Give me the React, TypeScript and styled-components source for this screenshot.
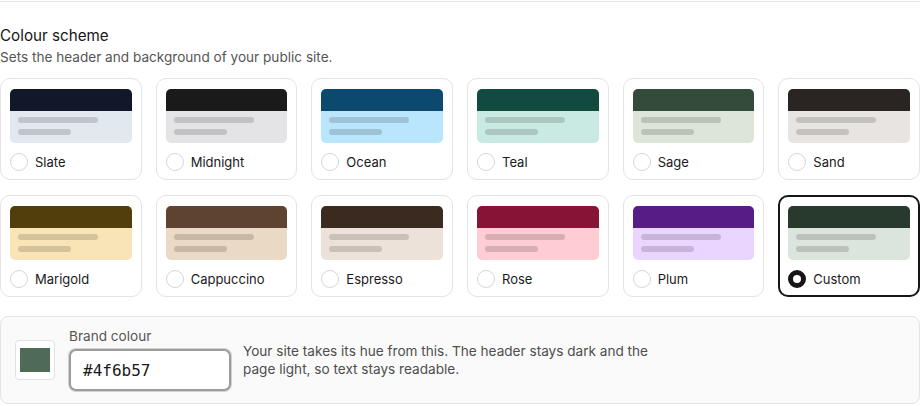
import styled, { createGlobalStyle } from 'styled-components';

type Scheme = {
	name: string;
	header: string;
	body: string;
};

const schemes: Scheme[] = [
	{ name: 'Slate', header: '#101829', body: '#e2e8f0' },
	{ name: 'Midnight', header: '#1a1a1a', body: '#e4e4e6' },
	{ name: 'Ocean', header: '#0b4a6e', body: '#bae6fd' },
	{ name: 'Teal', header: '#124a40', body: '#c9eae2' },
	{ name: 'Sage', header: '#344a3b', body: '#dce5d8' },
	{ name: 'Sand', header: '#2a2422', body: '#e7e4e1' },
	{ name: 'Marigold', header: '#523d0c', body: '#f9e4b7' },
	{ name: 'Cappuccino', header: '#5e4430', body: '#ead9c4' },
	{ name: 'Espresso', header: '#3a2a20', body: '#ede2da' },
	{ name: 'Rose', header: '#871336', body: '#fecdd3' },
	{ name: 'Plum', header: '#581c87', body: '#e9d5ff' },
	{ name: 'Custom', header: '#283a2e', body: '#dce4de' }
];

const GlobalStyle = createGlobalStyle`
	body {
		margin: 0;
		background: #ffffff;
		font-family: Inter, 'Liberation Sans', sans-serif;
		color: #1a1a1a;
	}
`;

const Page = styled.div`
	width: 920px;
	padding-top: 1px;
`;

const Divider = styled.div`
	height: 1px;
	background: #e6e6e6;
`;

const Section = styled.section`
	padding-top: 22px;
`;

const Title = styled.h2`
	margin: 0;
	font-size: 15.2px;
	line-height: 24px;
	font-weight: 400;
	color: #161616;
`;

const Subtitle = styled.p`
	margin: 0;
	font-size: 13.6px;
	line-height: 18px;
	color: #555555;
`;

const Grid = styled.div`
	margin-top: 12px;
	display: grid;
	grid-template-columns: repeat(6, 1fr);
	gap: 15px 14px;
`;

const Card = styled.button<{ $selected?: boolean }>`
	display: flex;
	flex-direction: column;
	gap: 9px;
	padding: 10px 9px 7px;
	height: 102px;
	box-sizing: border-box;
	background: #ffffff;
	border: ${(props) =>
		props.$selected ? '2px solid #161616' : '1px solid #e3e3e3'};
	border-radius: 10px;
	font-family: inherit;
	text-align: left;
	cursor: pointer;
	${(props) => props.$selected && 'padding: 9px 8px 6px;'}
`;

const Preview = styled.div<{ $body: string }>`
	height: 54px;
	flex-shrink: 0;
	border-radius: 5px;
	overflow: hidden;
	background: ${(props) => props.$body};
	display: flex;
	flex-direction: column;
`;

const PreviewHeader = styled.div<{ $header: string }>`
	height: 22px;
	flex-shrink: 0;
	background: ${(props) => props.$header};
`;

const PreviewBody = styled.div`
	display: flex;
	flex-direction: column;
	gap: 6px;
	padding: 6px 8px 0;
`;

const PreviewLine = styled.div<{ $width: number }>`
	width: ${(props) => props.$width}px;
	height: 6px;
	border-radius: 3px;
	background: rgba(0, 0, 0, 0.15);
`;

const OptionRow = styled.div`
	display: flex;
	align-items: center;
	gap: 7px;
	height: 20px;
`;

const Radio = styled.span<{ $checked?: boolean }>`
	width: 18px;
	height: 18px;
	box-sizing: border-box;
	border-radius: 50%;
	background: #ffffff;
	border: ${(props) =>
		props.$checked ? '5px solid #161616' : '1px solid #d6d6d6'};
	flex-shrink: 0;
`;

const OptionLabel = styled.span`
	font-size: 13px;
	color: #1a1a1a;
`;

const BrandPanel = styled.div`
	margin-top: 19px;
	display: flex;
	align-items: center;
	gap: 14px;
	padding: 11px 14px 12px;
	background: #fafafa;
	border: 1px solid #e4e4e4;
	border-radius: 8px;
`;

const Swatch = styled.div`
	width: 40px;
	height: 40px;
	box-sizing: border-box;
	padding: 7px 4px;
	border: 1px solid #e2e2e2;
	border-radius: 4px;
	background: #ffffff;
	display: flex;
`;

const SwatchColour = styled.div<{ $colour: string }>`
	flex: 1;
	background: ${(props) => props.$colour};
`;

const Field = styled.div`
	display: flex;
	flex-direction: column;
	gap: 5px;
`;

const FieldLabel = styled.label`
	font-size: 13.6px;
	line-height: 16px;
	color: #555555;
`;

const HexInput = styled.input`
	width: 162px;
	height: 42px;
	box-sizing: border-box;
	padding: 0 12px;
	border: 2px solid #9c9c9c;
	box-shadow: 0 0 0 1px #d2d2d2;
	border-radius: 7px;
	background: #ffffff;
	font-family: 'DejaVu Sans Mono', 'Liberation Mono', monospace;
	font-size: 16px;
	color: #1a1a1a;
	outline: none;
`;

const Description = styled.p`
	margin: 0 0 0 -2px;
	max-width: 420px;
	font-size: 13.6px;
	line-height: 18px;
	color: #4d4d4d;
`;

const App = () => {
	const brand = '#4f6b57';

	return (
		<>
			<GlobalStyle />
			<Page>
				<Divider />
				<Section>
					<Title>Colour scheme</Title>
					<Subtitle>Sets the header and background of your public site.</Subtitle>
					<Grid>
						{schemes.map((scheme) => {
							const selected = scheme.name === 'Custom';
							return (
								<Card key={scheme.name} $selected={selected}>
									<Preview $body={scheme.body}>
										<PreviewHeader $header={scheme.header} />
										<PreviewBody>
											<PreviewLine $width={80} />
											<PreviewLine $width={53} />
										</PreviewBody>
									</Preview>
									<OptionRow>
										<Radio $checked={selected} />
										<OptionLabel>{scheme.name}</OptionLabel>
									</OptionRow>
								</Card>
							);
						})}
					</Grid>
					<BrandPanel>
						<Swatch>
							<SwatchColour $colour={brand} />
						</Swatch>
						<Field>
							<FieldLabel>Brand colour</FieldLabel>
							<HexInput defaultValue={brand} />
						</Field>
						<Description>
							Your site takes its hue from this. The header stays dark and the
							page light, so text stays readable.
						</Description>
					</BrandPanel>
				</Section>
			</Page>
		</>
	);
};

export default App;
